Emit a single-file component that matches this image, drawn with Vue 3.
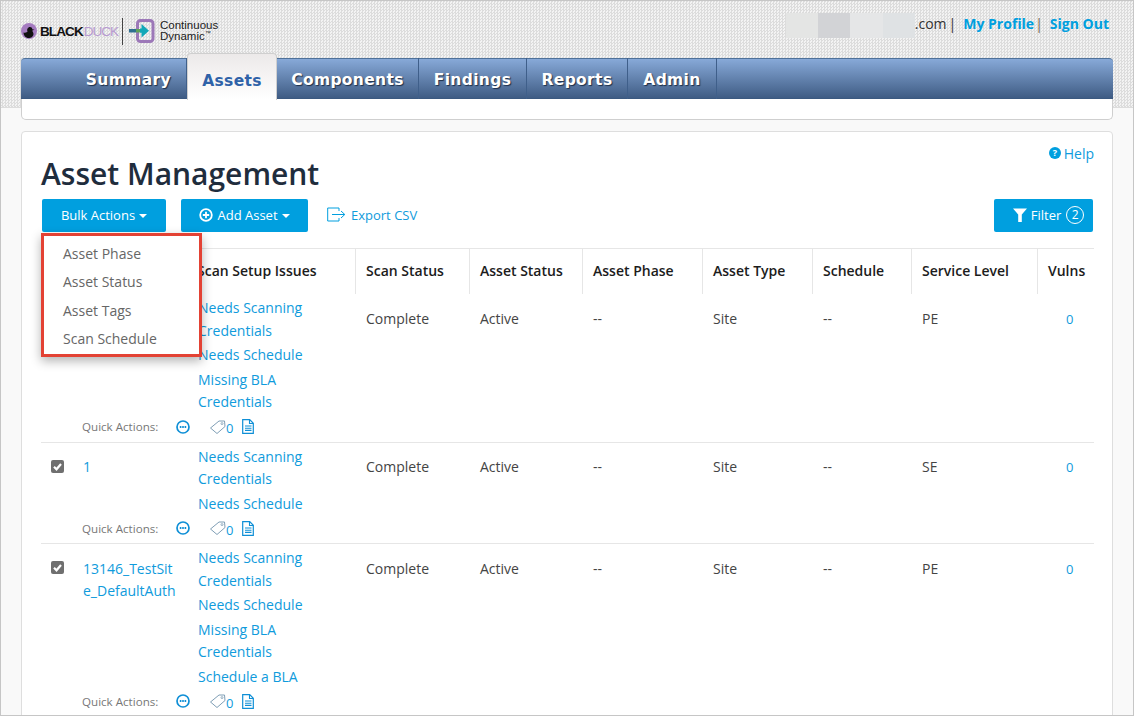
<template>
  <div class="page">
    <header class="top">
      <div class="brand">
        <svg class="duck" viewBox="0 0 16 16" width="16" height="16">
          <circle cx="8" cy="8" r="8" fill="#a57cc0" />
          <path d="M2.500 9.500c2 .5 3.500 0 4-1C6 7.500 5.800 5.500 7.500 4.500c1.700-1 3.800 0 3.800 1.700l2.200.6-2.200.8c0 1 1.200 2 1.200 3.300 0 2.300-2.300 4.100-5 4.100S2.500 12.500 2.500 9.500z" fill="#111" />
        </svg>
        <span class="bd-black">BLACK</span><span class="bd-duck">DUCK</span>
        <span class="brand-rule"></span>
        <svg class="cd-mark" viewBox="0 0 26 26" width="26" height="26">
          <rect x="8.500" y="2.500" width="15.500" height="21" rx="3" fill="none" stroke="#9c78b8" stroke-width="3" />
          <rect x="0" y="11" width="7" height="3.500" fill="#2f6f8f" />
          <rect x="7" y="11" width="4" height="3.500" fill="#5fa35a" />
          <path d="M12.500 6l7.500 6.700-7.500 6.800v-4.800H11v-4.200h1.500z" fill="#12a8b8" />
        </svg>
        <div class="cd-name">Continuous<br />Dynamic<sup>™</sup></div>
      </div>
      <div class="account">
        <div class="redacted"><i></i><i></i><i></i><i></i></div>
        <span>.com</span>
        <span class="pipe">|</span>
        <a class="acc-link">My Profile</a>
        <span class="pipe second">|</span>
        <a class="acc-link">Sign Out</a>
      </div>
    </header>

    <div class="nav-wrap">
      <nav class="tabs">
        <a v-for="t in tabs" :key="t.label" class="tab" :class="{ active: t.active, first: t.first }" :style="{ width: t.w + 'px' }">{{ t.label }}</a>
      </nav>
      <div class="subnav"></div>
    </div>

    <main class="card">
      <div class="title-row">
        <h1>Asset Management</h1>
        <a class="help">
          <svg viewBox="0 0 12 12" width="12" height="12">
            <circle cx="6" cy="6" r="6" fill="#009fdf" />
            <text x="6" y="9.300" text-anchor="middle" class="help-q">?</text>
          </svg>
          Help
        </a>
      </div>
      <div class="toolbar">
        <button class="btn bulk">Bulk Actions <span class="caret"></span></button>
        <button class="btn add">
          <svg viewBox="0 0 14 14" width="14" height="14">
            <circle cx="7" cy="7" r="5.800" fill="none" stroke="#fff" stroke-width="1.800" />
            <path d="M7 3.800v6.400M3.800 7h6.400" stroke="#fff" stroke-width="1.800" />
          </svg>
          Add Asset <span class="caret"></span>
        </button>
        <a class="export">
          <svg viewBox="0 0 19 15" width="19" height="15">
            <path d="M12 4V1H.7v13H12v-3" fill="none" stroke="#009fdf" stroke-width="1" />
            <path d="M5 7.500h12.500M14 4l3.800 3.500L14 11" fill="none" stroke="#009fdf" stroke-width="1" />
          </svg>
          Export CSV
        </a>
        <button class="btn filter">
          <svg viewBox="0 0 14 14" width="14" height="14">
            <path d="M0 .500h14L8.800 6.500V14H5.200V6.500z" fill="#fff" />
          </svg>
          Filter <span class="count">2</span>
        </button>
      </div>

      <div class="table">
        <div class="head">
          <div class="th first"></div>
          <div v-for="h in headers" :key="h" class="th">{{ h }}</div>
        </div>
        <div v-for="r in rows" :key="r.id" class="row">
          <div class="cells">
            <div class="check">
              <svg viewBox="0 0 13 13" width="13" height="13">
                <rect width="13" height="13" rx="2" fill="#6f6f6f" />
                <path d="M3 6.800l2.500 2.500L10 4" fill="none" stroke="#fff" stroke-width="2.200" />
              </svg>
            </div>
            <a class="name">{{ r.name }}</a>
            <div class="issues">
              <a v-for="(iss, i) in r.issues" :key="i">{{ iss }}</a>
            </div>
            <div class="val">Complete</div>
            <div class="val">Active</div>
            <div class="val">--</div>
            <div class="val">Site</div>
            <div class="val">--</div>
            <div class="val">{{ r.level }}</div>
            <a class="val vulns">0</a>
          </div>
          <div class="quick">
            <span class="quick-label">Quick Actions:</span>
            <svg class="q-more" viewBox="0 0 14 14" width="14" height="14">
              <circle cx="7" cy="7" r="6" fill="none" stroke="#0f8fd6" stroke-width="1.700" />
              <path d="M3.800 7h1.600M6.200 7h1.600M8.600 7h1.600" stroke="#0f8fd6" stroke-width="1.800" />
            </svg>
            <svg class="q-tag" viewBox="0 0 16 14" width="16" height="14">
              <path d="M.5 8 9 1h5.500l.5 5.500-8 7z" fill="none" stroke="#7f9eb5" stroke-width="1" />
              <circle cx="12" cy="3.600" r="1" fill="none" stroke="#7f9eb5" stroke-width=".8" />
            </svg>
            <span class="q-zero">0</span>
            <svg class="q-doc" viewBox="0 0 12 15" width="12" height="15">
              <path d="M.7.700h7l3.600 3.600v10H.700z" fill="#fff" stroke="#0f8fd6" stroke-width="1.200" />
              <path d="M7.500.700v3.800h3.800M3 7h6.500M3 9.200h6.500M3 11.400h6.500" fill="none" stroke="#0f8fd6" stroke-width="1.100" />
            </svg>
          </div>
        </div>
        <div class="menu">
          <a>Asset Phase</a>
          <a>Asset Status</a>
          <a>Asset Tags</a>
          <a>Scan Schedule</a>
        </div>
      </div>
    </main>
  </div>
</template>

<script setup>
const tabs = [
  { label: 'Summary', w: 166, first: true },
  { label: 'Assets', w: 90, active: true },
  { label: 'Components', w: 142 },
  { label: 'Findings', w: 108 },
  { label: 'Reports', w: 101 },
  { label: 'Admin', w: 89 }
]

const headers = [
  'Scan Setup Issues',
  'Scan Status',
  'Asset Status',
  'Asset Phase',
  'Asset Type',
  'Schedule',
  'Service Level',
  'Vulns'
]

const rows = [
  {
    id: 'a',
    name: '',
    level: 'PE',
    issues: ['Needs Scanning Credentials', 'Needs Schedule', 'Missing BLA Credentials']
  },
  {
    id: 'b',
    name: '1',
    level: 'SE',
    issues: ['Needs Scanning Credentials', 'Needs Schedule']
  },
  {
    id: 'c',
    name: '13146_TestSite_DefaultAuth',
    level: 'PE',
    issues: ['Needs Scanning Credentials', 'Needs Schedule', 'Missing BLA Credentials', 'Schedule a BLA']
  }
]
</script>

<style>
html,
body {
  margin: 0;
  padding: 0;
}
</style>

<style scoped>
.page {
  width: 1134px;
  height: 716px;
  box-sizing: border-box;
  border: 1px solid #c6c6c6;
  overflow: hidden;
  background: #f9f9f9;
  font-family: "Open Sans", sans-serif;
  font-size: 14px;
  color: #444;
  position: relative;
}

a {
  color: #0f9bdc;
  text-decoration: none;
}

.top {
  height: 107px;
  margin-bottom: -50px;
  padding: 0 24px 0 20px;
  box-sizing: border-box;
  display: flex;
  justify-content: space-between;
  background-color: #e9e9e9;
  background-image: repeating-conic-gradient(#dcdcdc 0 25%, #f3f3f3 0 50%);
  background-size: 3px 3px;
  border-bottom: 1px solid #dcdcdc;
}

.brand {
  display: flex;
  align-items: center;
  height: 60px;
  font-family: "Liberation Sans", sans-serif;
}

.duck {
  margin-right: 3px;
}

.bd-black {
  font-weight: 700;
  font-size: 13.500px;
  letter-spacing: -0.9px;
  color: #111;
}

.bd-duck {
  font-size: 13.500px;
  letter-spacing: -1px;
  margin-left: 1px;
  color: #b79ad0;
}

.brand-rule {
  width: 1px;
  height: 27px;
  background: #444;
  margin: 0 6px 0 4px;
}

.cd-name {
  font-size: 11.500px;
  line-height: 11px;
  color: #222;
  margin-left: 5px;
}

.cd-name sup {
  font-size: 6px;
  line-height: 0;
}

.account {
  display: flex;
  align-items: center;
  height: 44px;
  color: #333;
}

.redacted {
  display: flex;
  align-self: flex-start;
  margin-top: 12px;
  height: 25px;
}

.redacted i {
  width: 32.300px;
}

.redacted i:nth-child(1) {
  background: #e4e5e4;
}

.redacted i:nth-child(2) {
  background: #d2d3d6;
}

.redacted i:nth-child(3) {
  background: #e5e6e7;
}

.redacted i:nth-child(4) {
  background: #dfe2e4;
}

.pipe {
  margin: 0 7px 0 2px;
}

.pipe.second {
  color: #6f6250;
  margin-left: 1px;
}

.acc-link {
  font-weight: 700;
  color: #009fdf;
}

.nav-wrap {
  margin: 0 20px;
  position: relative;
}

.tabs {
  height: 41px;
  display: flex;
  box-sizing: border-box;
  border-radius: 4px 4px 0 0;
  border-top: 1px solid #4f7199;
  border-bottom: 1px solid #3b5980;
  background: linear-gradient(#87a9d8, #3f5c84);
}

.tab {
  height: 41px;
  margin-top: -1px;
  padding-top: 2px;
  box-sizing: border-box;
  display: flex;
  align-items: center;
  justify-content: center;
  border-right: 1px solid #3f5f8a;
  font-family: "DejaVu Sans", sans-serif;
  font-weight: 700;
  font-size: 15.500px;
  letter-spacing: 0.35px;
  color: #fff;
  text-shadow: 1px 1px 1px #1d2f49;
}

.tab.first {
  justify-content: flex-end;
  padding-right: 15px;
}

.tab.active {
  height: 47px;
  margin-top: -6px;
  padding-top: 8px;
  border: 1px solid #cfcfcf;
  border-bottom: 0;
  border-radius: 4px 4px 0 0;
  background: linear-gradient(#ece9e9, #fff);
  color: #2f62a8;
  text-shadow: none;
}

.subnav {
  height: 20px;
  background: #fff;
  border: 1px solid #cfcfcf;
  border-top: 0;
  border-radius: 0 0 5px 5px;
}

.card {
  margin: 11px 20px 0;
  padding: 0 19px;
  height: 600px;
  box-sizing: border-box;
  background: #fff;
  border: 1px solid #dedede;
  border-radius: 4px;
}

.title-row {
  height: 60px;
  display: flex;
  justify-content: space-between;
  align-items: flex-start;
}

.help {
  display: flex;
  align-items: center;
  gap: 3px;
  height: 22px;
  margin-top: 10px;
  margin-right: -1px;
}

.help-q {
  font-size: 9px;
  font-weight: 700;
  fill: #fff;
}

h1 {
  margin: 24px 0 0;
  font-size: 30px;
  font-weight: 600;
  line-height: 36px;
  color: #1f2d3d;
}

.toolbar {
  display: flex;
  align-items: center;
  margin-top: 7px;
  height: 33px;
}

.btn {
  height: 33px;
  box-sizing: border-box;
  border: 0;
  border-radius: 2px;
  background: #009fdf;
  color: #fff;
  font: 13px "Open Sans", sans-serif;
  display: flex;
  align-items: center;
  justify-content: center;
  padding: 0 0 2px;
}

.bulk {
  width: 124px;
  margin-left: 1px;
  gap: 4px;
}

.add {
  width: 127px;
  margin-left: 15px;
  gap: 4px;
}

.caret {
  display: inline-block;
  border: 4px solid transparent;
  border-top-color: #fff;
  border-bottom: 0;
  margin-top: 2px;
}

.export {
  margin-left: 19px;
  padding-bottom: 2px;
  display: flex;
  align-items: center;
  gap: 5px;
  font-size: 13px;
}

.filter {
  margin-left: auto;
  width: 99px;
  gap: 4px;
  padding-left: 10px;
}

.count {
  width: 18px;
  height: 18px;
  box-sizing: border-box;
  border: 1px solid #fff;
  border-radius: 50%;
  display: inline-flex;
  align-items: center;
  justify-content: center;
  font-size: 12px;
  margin-left: 1px;
}

.table {
  position: relative;
  margin-top: 16px;
  width: 1053px;
}

.head,
.cells {
  display: grid;
  grid-template-columns: 41px 106px 168px 114px 113px 120px 110px 99px 126px 56px;
}

.head {
  height: 45px;
  border-top: 1px solid #e6e6e6;
}

.th {
  display: flex;
  align-items: center;
  padding: 0 0 2px 10px;
  border-right: 1px solid #e6e6e6;
  font-weight: 600;
  font-size: 14px;
  color: #1c1c1c;
}

.th.first {
  grid-column: span 2;
  padding: 0;
  border-right: 0;
}

.th:nth-child(2) {
  padding-left: 9px;
}

.th:last-child {
  border-right: 0;
}

.row {
  border-bottom: 1px solid #e6e6e6;
}

.cells {
  padding-top: 3px;
}

.check {
  padding: 12px 0 0 10px;
}

.name {
  padding: 10.800px 10px 0 1px;
  line-height: 22.500px;
  word-break: break-all;
}

.issues {
  display: flex;
  flex-direction: column;
  align-items: flex-start;
  gap: 2px;
  padding-left: 10px;
  line-height: 22.500px;
  width: 118px;
}

.issues a {
  display: block;
}

.val {
  padding: 10.800px 0 0 10px;
  line-height: 22.500px;
  color: #444;
}

a.vulns {
  color: #0f9bdc;
  font-size: 13px;
  padding-left: 28px;
}

.quick {
  height: 26px;
  padding: 0 0 2px 41px;
  display: flex;
  align-items: center;
  font-size: 11.600px;
  color: #777;
}

.quick-label {
  width: 94px;
}

.q-tag {
  margin-left: 20px;
}

.q-zero {
  color: #0f9bdc;
  font-size: 13px;
  margin-top: 3px;
  width: 16px;
}

.menu {
  position: absolute;
  left: 0;
  top: -15px;
  width: 155px;
  height: 114px;
  padding-top: 4px;
  background: #fff;
  border: 3px solid #e34234;
  box-shadow: 0 4px 10px rgba(0, 0, 0, 0.3);
  display: flex;
  flex-direction: column;
}

.menu a {
  height: 28.300px;
  line-height: 28.300px;
  padding-left: 19px;
  color: #666;
}
</style>
